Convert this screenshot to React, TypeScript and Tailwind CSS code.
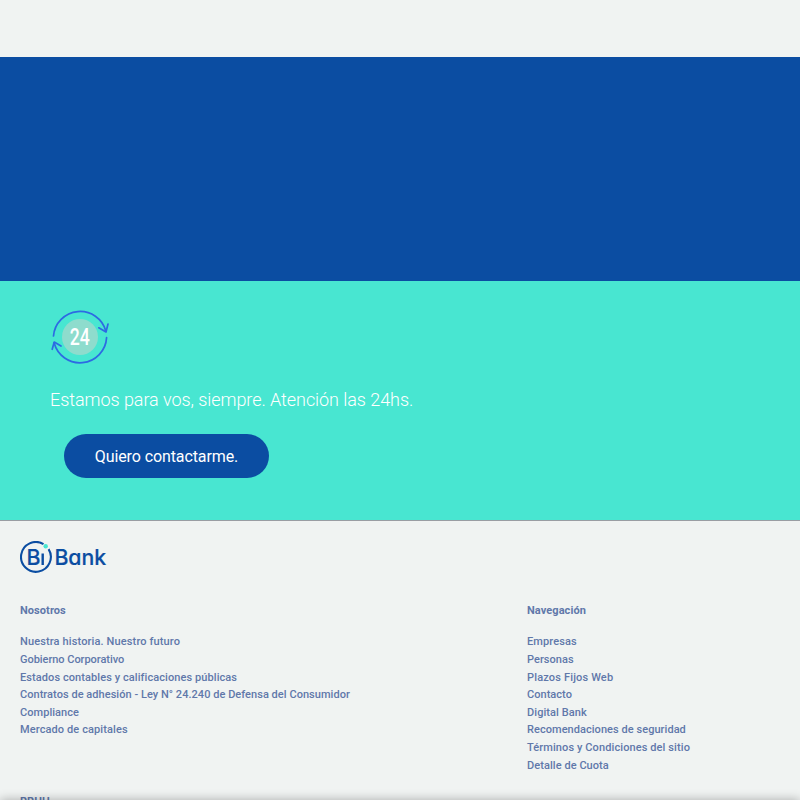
type Link = { label: string; tracking: string };

const about: Link[] = [
  { label: 'Nuestra historia. Nuestro futuro', tracking: 'tracking-[0.13px]' },
  { label: 'Gobierno Corporativo', tracking: 'tracking-[-0.04px]' },
  { label: 'Estados contables y calificaciones públicas', tracking: 'tracking-[0.08px]' },
  { label: 'Contratos de adhesión - Ley N° 24.240 de Defensa del Consumidor', tracking: 'tracking-[0.04px]' },
  { label: 'Compliance', tracking: 'tracking-[0.05px]' },
  { label: 'Mercado de capitales', tracking: 'tracking-[0.11px]' },
];

const navigation: Link[] = [
  { label: 'Empresas', tracking: 'tracking-[0.1px]' },
  { label: 'Personas', tracking: 'tracking-[0.04px]' },
  { label: 'Plazos Fijos Web', tracking: 'tracking-[0.16px]' },
  { label: 'Contacto', tracking: 'tracking-[0.03px]' },
  { label: 'Digital Bank', tracking: 'tracking-[0.08px]' },
  { label: 'Recomendaciones de seguridad', tracking: 'tracking-[0.05px]' },
  { label: 'Términos y Condiciones del sitio', tracking: 'tracking-[0.1px]' },
  { label: 'Detalle de Cuota', tracking: 'tracking-[0.06px]' },
];

function SupportIcon() {
  return (
    <svg width="60" height="60" viewBox="0 0 60 60" fill="none" className="block">
      <circle cx="30" cy="30" r="18" fill="#8edccd" />
      <g stroke="#2d6ae3" strokeWidth="1.7" strokeLinecap="round" strokeLinejoin="round">
        <path d="M3.5 29A26.7 26.7 0 0 1 55.9 24.2" />
        <path d="M48.8 20.8L56 25L58 17" />
        <path d="M56.6 30.6A26.7 26.7 0 0 1 4.1 35.8" />
        <path d="M2.2 42.3L4.2 35L11 39" />
      </g>
      <text
        x="19.7"
        y="38.4"
        textLength="20"
        lengthAdjust="spacingAndGlyphs"
        className="fill-white font-['Roboto',sans-serif] text-[24px] font-medium"
      >
        24
      </text>
    </svg>
  );
}

function Logo() {
  return (
    <svg width="88" height="32" viewBox="0 0 88 32" fill="none" className="block">
      <path d="M23.5 3.1A14.9 14.9 0 1 0 28.6 8.1" stroke="#0b4da2" strokeWidth="2.1" />
      <circle cx="25.7" cy="5.3" r="2.2" fill="#48e6d1" />
      <g className="fill-[#0b4da2] font-['Inter',sans-serif] text-[22px] font-medium [font-feature-settings:'cv11']">
        <text x="6.5" y="24" textLength="14" lengthAdjust="spacingAndGlyphs" stroke="#0b4da2" strokeWidth="0.2">B</text>
        <text x="34.4" y="24" textLength="51.8" lengthAdjust="spacingAndGlyphs" stroke="#0b4da2" strokeWidth="0.2">Bank</text>
      </g>
      <rect x="21.5" y="12.5" width="2.4" height="11.5" fill="#0b4da2" />
    </svg>
  );
}

function LinkColumn({ title, items }: { title: string; items: Link[] }) {
  return (
    <div>
      <h4 className="mb-[14.2px] font-bold tracking-[0.07px]">{title}</h4>
      <ul>
        {items.map((item) => (
          <li key={item.label} className={item.tracking}>
            <a href="#">{item.label}</a>
          </li>
        ))}
      </ul>
    </div>
  );
}

export default function App() {
  return (
    <div className="relative h-[800px] w-full overflow-hidden bg-[#f0f3f2] font-['Roboto',sans-serif]">
      <div className="h-[57px]" />
      <section className="h-56 bg-[#0b4da2]" />
      <section className="h-[239px] bg-[#48e6d1] px-[50px] pt-[26px]">
        <SupportIcon />
        <p className="mt-[19px] text-[18px] leading-[27px] font-light tracking-[-0.06px] text-white">
          Estamos para vos, siempre. Atención las 24hs.
        </p>
        <button className="mt-[21px] ml-3.5 h-11 w-[205px] rounded-full bg-[#0b4da2] pt-0.5 text-base tracking-[-0.1px] text-white">
          Quiero contactarme.
        </button>
      </section>
      <footer className="border-t border-[#999da3] px-5 pt-5 text-[11px] leading-[17.6px] font-medium text-[#6078aa]">
        <Logo />
        <div className="mt-[28.7px] grid grid-cols-[507px_1fr]">
          <LinkColumn title="Nosotros" items={about} />
          <LinkColumn title="Navegación" items={navigation} />
        </div>
        <h4 className="mt-[18.9px] font-bold tracking-[0.07px]">RRHH</h4>
      </footer>
      <div className="absolute inset-x-0 top-full h-20 bg-white shadow-[0_0_10px_rgba(0,0,0,0.3)]" />
    </div>
  );
}
